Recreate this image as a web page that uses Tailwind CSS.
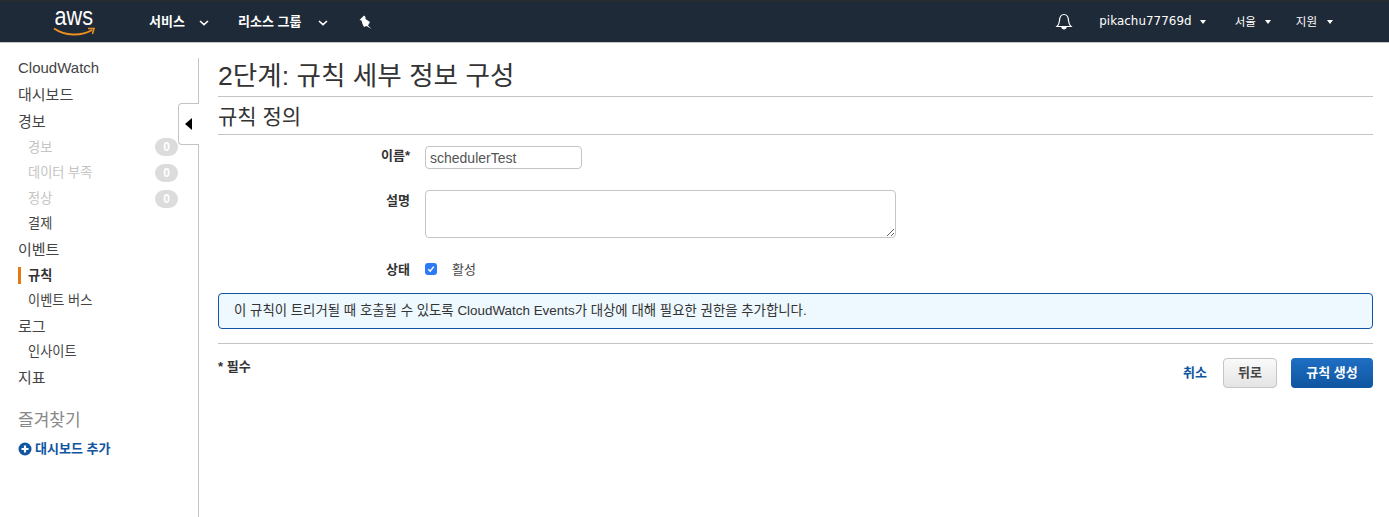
<!DOCTYPE html>
<html lang="ko">
<head>
  <meta charset="UTF-8" />
  <title>CloudWatch – 규칙 생성</title>
  <script src="https://cdn.jsdelivr.net/npm/@tailwindcss/browser@4"></script>
</head>
<body class="bg-white h-[517px] overflow-hidden font-['Liberation_Sans','Noto_Sans_CJK_KR',sans-serif] text-[#333]">
  <!-- top nav -->
  <header class="h-[43px] bg-[#1f2a38] border-t border-t-[#2b2b2b] border-b border-b-[#c4c4c4] flex items-center text-white">
    <div class="w-[149px] pl-[53px] shrink-0">
      <svg width="52" height="39" viewBox="0 -4 52 39" class="block mt-[-6px]">
        <text x="1.500" y="22" font-family="Liberation Sans" font-size="26" textLength="38.500" lengthAdjust="spacingAndGlyphs" fill="#fff">aws</text>
        <path d="M1 25.500 C 12 33, 28 33.500, 39 27" fill="none" stroke="#ec8f1e" stroke-width="2"/>
        <path d="M35 25.500 L41 25.500 L39.500 31" fill="none" stroke="#ec8f1e" stroke-width="1.600"/>
      </svg>
    </div>
    <span class="text-[13px] font-bold w-[39px] pt-[1px]">서비스</span>
    <svg width="10" height="6" viewBox="0 0 10 6" class="ml-[11px] mt-[2px]"><path d="M1 1l4 3.600L9 1" fill="none" stroke="#fff" stroke-width="1.600"/></svg>
    <span class="text-[13px] font-bold ml-[29px] w-[69px] whitespace-nowrap pt-[1px]">리소스 그룹</span>
    <svg width="10" height="6" viewBox="0 0 10 6" class="ml-[11px] mt-[2px]"><path d="M1 1l4 3.600L9 1" fill="none" stroke="#fff" stroke-width="1.600"/></svg>
    <svg width="13" height="14" viewBox="0 0 13 14" class="ml-[31px]"><path d="M0.500 5 L5 0.500 L6.500 2 L6.500 4 L11 7 L9 10.500 L12.500 14 L7.500 11 L5 12 L3.500 9 L2.500 5.500 Z" fill="#fff"/></svg>
    <svg width="18" height="19" viewBox="0 0 18 19" class="ml-auto" fill="none" stroke="#fff" stroke-width="1.200"><path d="M2 14.500c1.800-1.600 2.300-3.200 2.500-6C4.700 5 6.500 2.500 9 2.500s4.300 2.500 4.500 6c.2 2.800.7 4.400 2.500 6z"/><path d="M7 15.500c.4 1.800 3.600 1.800 4 0z" fill="#fff"/></svg>
    <span class="ml-[26px] text-[11.900px] font-['DejaVu_Sans','Noto_Sans_CJK_KR',sans-serif] tracking-[0.05px]">pikachu77769d</span>
    <span class="ml-[8px] border-x-[3.500px] border-x-transparent border-t-[4px] border-t-white"></span>
    <span class="ml-[29px] text-[11.500px] font-['Noto_Sans_CJK_KR',sans-serif]">서울</span>
    <span class="ml-[9px] border-x-[3.500px] border-x-transparent border-t-[4px] border-t-white"></span>
    <span class="ml-[25px] text-[11.500px] font-['Noto_Sans_CJK_KR',sans-serif]">지원</span>
    <span class="ml-[10px] mr-[56px] border-x-[3.500px] border-x-transparent border-t-[4px] border-t-white"></span>
  </header>

  <div class="flex relative h-[474px]">
    <!-- sidebar -->
    <aside class="w-[199px] mt-[15px] border-r border-[#c4c4c4] shrink-0 pl-[18px] text-[#444]">
      <ul class="text-[15px] leading-[25.550px] -mt-[3px]">
        <li>CloudWatch</li>
        <li class="mt-[1px]">대시보드</li>
        <li class="mt-[2px]">경보</li>
        <li class="pl-[10px] pr-[20px] text-[13.200px] text-[#c4c4c4] flex justify-between items-center">경보 <span class="w-[23px] h-[18px] rounded-full bg-[#dcdcdc] text-white text-[12px] font-bold leading-[18px] text-center">0</span></li>
        <li class="pl-[10px] pr-[20px] text-[13.200px] text-[#c4c4c4] flex justify-between items-center">데이터 부족 <span class="w-[23px] h-[18px] rounded-full bg-[#dcdcdc] text-white text-[12px] font-bold leading-[18px] text-center">0</span></li>
        <li class="pl-[10px] pr-[20px] text-[13.200px] text-[#c4c4c4] flex justify-between items-center">정상 <span class="w-[23px] h-[18px] rounded-full bg-[#dcdcdc] text-white text-[12px] font-bold leading-[18px] text-center">0</span></li>
        <li class="pl-[10px] text-[13.200px]">결제</li>
        <li>이벤트</li>
        <li class="text-[13.200px] font-bold text-[#333] border-l-[3px] border-[#e47911] pl-[7px] leading-[17px] my-[4.300px]">규칙</li>
        <li class="pl-[10px] text-[13.200px]">이벤트 버스</li>
        <li>로그</li>
        <li class="pl-[10px] text-[13.200px]">인사이트</li>
        <li>지표</li>
      </ul>
      <p class="mt-[19px] text-[17px] leading-[24px] text-[#888]">즐겨찾기</p>
      <a class="mt-[7px] flex items-center gap-[3px] text-[13px] font-bold text-[#0f559f] leading-[18px]">
        <svg width="14" height="14" viewBox="0 0 14 14"><circle cx="7" cy="7" r="6.500" fill="#0f559f"/><path d="M7 3.500v7M3.500 7h7" stroke="#fff" stroke-width="2.200"/></svg>
        대시보드 추가
      </a>
    </aside>
    <!-- collapse tab -->
    <button class="absolute left-[178px] top-[60px] w-[21px] h-[42px] bg-white border border-r-0 border-[#c4c4c4] rounded-tl-[4px] rounded-bl-[4px] flex items-center justify-center pr-[1px]">
      <span class="border-y-[6px] border-y-transparent border-r-[7px] border-r-black"></span>
    </button>

    <!-- main -->
    <main class="flex-1 pl-[19px] pr-[16px]">
      <h1 class="text-[26.600px] leading-[32px] pt-[17px] pb-[4px] box-content text-[#333] border-b border-[#c4c4c4]">2단계: 규칙 세부 정보 구성</h1>
      <h2 class="text-[21px] leading-[25px] pt-[7px] pb-[5px] box-content border-b border-[#c4c4c4]">규칙 정의</h2>

      <form class="mt-[11px]">
        <div class="flex h-[23px]">
          <label class="w-[192px] text-right text-[13px] font-bold leading-[20px]">이름*</label>
          <input value="schedulerTest" class="ml-[15px] w-[157px] h-[23px] border border-[#c4c4c4] rounded-[4px] px-[4px] text-[14px] text-[#555] outline-none" />
        </div>
        <div class="flex mt-[21px] h-[48px]">
          <label class="w-[192px] text-right text-[13px] font-bold leading-[20px] pt-[1px]">설명</label>
          <textarea class="ml-[15px] w-[471px] h-[48px] border border-[#c4c4c4] rounded-[4px] outline-none"></textarea>
        </div>
        <div class="flex mt-[21px] h-[20px] items-center">
          <label class="w-[192px] text-right text-[13px] font-bold pt-[1px]">상태</label>
          <span class="ml-[15px] w-[12px] h-[12px] rounded-[3px] bg-[#2d7bf4] flex items-center justify-center">
            <svg width="8" height="8" viewBox="0 0 8 8"><path d="M1.300 4.200L3.200 6.200 6.800 1.600" fill="none" stroke="#fff" stroke-width="1.500"/></svg>
          </span>
          <span class="ml-[15px] text-[13px] text-[#444] pt-[1px]">활성</span>
        </div>
      </form>

      <div class="mt-[14px] h-[36px] border border-[#0f559f] rounded-[4px] bg-[#edf8ff] pl-[15px] flex items-center text-[13.420px] text-[#333]">
        이 규칙이 트리거될 때 호출될 수 있도록 CloudWatch Events가 대상에 대해 필요한 권한을 추가합니다.
      </div>
      <div class="mt-[14px] border-t border-[#c4c4c4] flex justify-between">
        <span class="mt-[14px] text-[13px] font-bold leading-[18px]">* 필수</span>
        <div class="mt-[14px] flex items-center">
          <a class="text-[13px] font-bold text-[#0f559f]">취소</a>
          <button class="ml-[16px] w-[54px] h-[30px] border border-[#c4c4c4] rounded-[4px] bg-gradient-to-b from-[#fafafa] to-[#e4e4e4] text-[13px] font-bold text-[#444]">뒤로</button>
          <button class="ml-[14px] w-[82px] h-[30px] rounded-[4px] bg-gradient-to-b from-[#1f6fc4] to-[#0f559f] text-[13px] font-bold text-white">규칙 생성</button>
        </div>
      </div>
    </main>
  </div>
</body>
</html>
